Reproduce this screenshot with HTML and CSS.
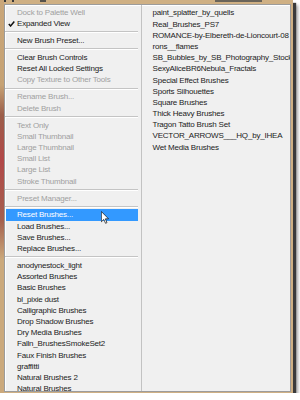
FILE: index.html
```html
<!DOCTYPE html>
<html>
<head>
<meta charset="utf-8">
<link rel="stylesheet" href="styles.css">
</head>
<body>
<div class="photo">
  <div class="menu">
    <ul class="col col-left">
      <li class="item dis">Dock to Palette Well</li>
      <li class="item"><svg class="check" width="7" height="6" viewBox="0 0 7 6"><path d="M0.8 3 L2.6 5 L6.3 0.6" fill="none" stroke="#111" stroke-width="1.5"/></svg>Expanded View</li>
      <li class="sep"></li>
      <li class="item">New Brush Preset...</li>
      <li class="sep"></li>
      <li class="item">Clear Brush Controls</li>
      <li class="item">Reset All Locked Settings</li>
      <li class="item dis">Copy Texture to Other Tools</li>
      <li class="sep"></li>
      <li class="item dis">Rename Brush...</li>
      <li class="item dis">Delete Brush</li>
      <li class="sep"></li>
      <li class="item dis">Text Only</li>
      <li class="item dis">Small Thumbnail</li>
      <li class="item dis">Large Thumbnail</li>
      <li class="item dis">Small List</li>
      <li class="item dis">Large List</li>
      <li class="item dis">Stroke Thumbnail</li>
      <li class="sep"></li>
      <li class="item dis">Preset Manager...</li>
      <li class="sep"></li>
      <li class="item active">Reset Brushes...</li>
      <li class="item">Load Brushes...</li>
      <li class="item">Save Brushes...</li>
      <li class="item">Replace Brushes...</li>
      <li class="sep"></li>
      <li class="item">anodynestock_light</li>
      <li class="item">Assorted Brushes</li>
      <li class="item">Basic Brushes</li>
      <li class="item">bl_pixie dust</li>
      <li class="item">Calligraphic Brushes</li>
      <li class="item">Drop Shadow Brushes</li>
      <li class="item">Dry Media Brushes</li>
      <li class="item">Falln_BrushesSmokeSet2</li>
      <li class="item">Faux Finish Brushes</li>
      <li class="item">graffitti</li>
      <li class="item">Natural Brushes 2</li>
      <li class="item">Natural Brushes</li>
    </ul>
    <div class="vsep"></div>
    <ul class="col col-right">
      <li class="item">paint_splatter_by_quells</li>
      <li class="item">Real_Brushes_PS7</li>
      <li class="item">ROMANCE-by-Elbereth-de-Lioncourt-08</li>
      <li class="item">rons__flames</li>
      <li class="item">SB_Bubbles_by_SB_Photography_Stock</li>
      <li class="item">SexyAliceBR6Nebula_Fractals</li>
      <li class="item">Special Effect Brushes</li>
      <li class="item">Sports Silhouettes</li>
      <li class="item">Square Brushes</li>
      <li class="item">Thick Heavy Brushes</li>
      <li class="item">Tragon Tatto Brush Set</li>
      <li class="item">VECTOR_ARROWS___HQ_by_IHEA</li>
      <li class="item">Wet Media Brushes</li>
    </ul>
  </div>
  <svg class="cursor" width="8" height="13" viewBox="0 0 12 19"><path d="M0.5 0.5 L0.5 16 L4.2 12.4 L6.8 18.2 L9 17.2 L6.5 11.5 L11.3 11.5 Z" fill="#fff" stroke="#000" stroke-width="1"/></svg>
</div>
</body>
</html>
```
FILE: styles.css
```css
html, body {
  margin: 0;
  padding: 0;
  background: #ffffff;
}

.photo {
  position: relative;
  width: 293px;
  height: 393px;
  box-sizing: border-box;
  padding: 4px 2px 1px 4px;
  background:
    linear-gradient(to bottom, #c9a679 0, #c6a274 85px, #9c5e4a 115px, #b24848 160px, #a4604e 220px, #cba97c 260px, #cba97c 100%) left top / 4px 100% no-repeat,
    linear-gradient(to right, #3a3a3a 0, #3a3a3a 6px, #cfb084 6px, #cfb084 12px, #3a3a3a 12px, #3a3a3a 14px, #cfb084 14px, #cfb084 40px, #55524c 40px, #55524c 46px, #cfb084 46px, #cfb084 215px, #6a645a 215px, #6a645a 262px, #cfb084 262px) left top / 100% 2px no-repeat,
    #cfb084;
  box-shadow: 3px 3px 1px #3b3b3b, 5px 5px 3px rgba(0, 0, 0, 0.35);
  overflow: hidden;
}

.menu {
  display: grid;
  grid-template-columns: 136px 1px 1fr;
  height: 100%;
  box-sizing: border-box;
  background: #f0f0f0;
  border: 1px solid #9c9c9c;
  box-shadow: inset 1px 1px 0 #ffffff;
  overflow: hidden;
  font-family: "Liberation Sans", Arial, sans-serif;
  font-size: 8px;
  letter-spacing: -0.2px;
  color: #1c1c1c;
}

.col {
  list-style: none;
  margin: 0;
  padding: 0;
}

.col-left {
  padding-top: 1.9px;
}

.col-right {
  padding-top: 2.4px;
}

.vsep {
  background: #c2c2c2;
}

.item {
  position: relative;
  height: 11.2px;
  line-height: 11.2px;
  white-space: nowrap;
}

.col-left .item {
  padding-left: 11px;
  margin: 0 3px 0 1px;
}

.col-right .item {
  padding-left: 10.5px;
}

.dis {
  color: #a0a0a0;
}

.active {
  background: #3399ff;
  color: #ffffff;
}

.check {
  position: absolute;
  left: 2px;
  top: 3px;
}

.sep {
  height: 5.8px;
  display: flex;
  align-items: center;
  margin-right: 3px;
}

.sep::before {
  content: "";
  flex: 1;
  height: 1px;
  background: #c4c4c4;
  border-bottom: 1px solid #ffffff;
}

.cursor {
  position: absolute;
  left: 101px;
  top: 211px;
}
```
